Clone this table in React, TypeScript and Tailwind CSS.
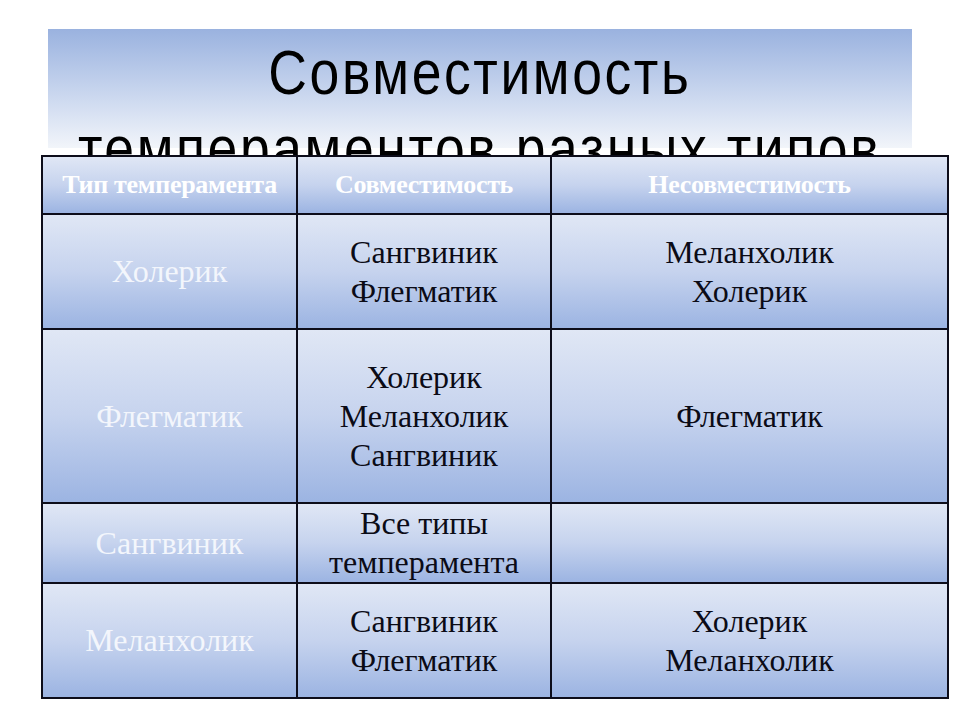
const rows = [
  { type: 'Холерик', ok: ['Сангвиник', 'Флегматик'], bad: ['Меланхолик', 'Холерик'], h: 'h-[115px]' },
  { type: 'Флегматик', ok: ['Холерик', 'Меланхолик', 'Сангвиник'], bad: ['Флегматик'], h: 'h-[174px]' },
  { type: 'Сангвиник', ok: ['Все типы', 'темперамента'], bad: [], h: 'h-[78px]' },
  { type: 'Меланхолик', ok: ['Сангвиник', 'Флегматик'], bad: ['Холерик', 'Меланхолик'], h: 'h-[115px]' },
];

const cell = 'border-2 border-[#0d0d1a] bg-gradient-to-b from-[#e0e7f5] via-[#c6d3ee] to-[#9cb4e2] text-center align-middle p-0';

const App = () => {
  return (
    <div className="w-[960px] h-[720px] bg-white overflow-hidden pt-[29px]">
      {/* Title banner */}
      <div className="mx-[48px] h-[119px] bg-gradient-to-b from-[#9ab2df] to-[#f2f5fa]">
        <h1 className="flex flex-col items-center pt-[5px] text-[63px] leading-[76px] tracking-[3px] text-black whitespace-nowrap font-['Liberation_Sans',sans-serif]">
          <span className="inline-block scale-x-[0.85]">Совместимость</span>
          <span className="inline-block scale-x-[0.85]">темпераментов разных типов</span>
        </h1>
      </div>

      {/* Table */}
      <div className="relative z-10 mt-[7px] ml-[41px] w-[908px]">
        <table className="w-full border-collapse table-fixed font-['Liberation_Serif',serif]">
          <colgroup>
            <col className="w-[255px]" />
            <col className="w-[254px]" />
            <col />
          </colgroup>
          <thead>
            <tr className="h-[58px]">
              {['Тип темперамента', 'Совместимость', 'Несовместимость'].map((t) => (
                <th key={t} className={`${cell} text-white font-bold text-[26px] leading-none tracking-[-0.3px]`}>
                  {t}
                </th>
              ))}
            </tr>
          </thead>
          <tbody>
            {rows.map((r) => (
              <tr key={r.type} className={r.h}>
                <td className={`${cell} text-[#f3f6fc] text-[32px] leading-[39px]`}>{r.type}</td>
                <td className={`${cell} text-[#0b0b16] text-[32px] leading-[39px]`}>
                  {r.ok.map((s) => (
                    <div key={s}>{s}</div>
                  ))}
                </td>
                <td className={`${cell} text-[#0b0b16] text-[32px] leading-[39px]`}>
                  {r.bad.map((s) => (
                    <div key={s}>{s}</div>
                  ))}
                </td>
              </tr>
            ))}
          </tbody>
        </table>
      </div>
    </div>
  );
};

export default App;
